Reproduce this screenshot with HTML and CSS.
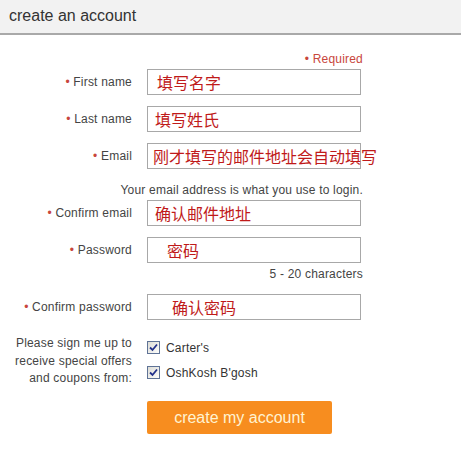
FILE: index.html
```html
<!DOCTYPE html>
<html lang="en">
<head>
  <meta charset="UTF-8" />
  <title>create an account</title>
  <link rel="stylesheet" href="styles.css">
</head>
<body>
  <div class="header">create an account</div>

  <form class="form">
    <p class="required"><span class="dot">&bull;</span> Required</p>

    <div class="row">
      <label class="label"><span class="dot">&bull;</span> First name</label>
      <div class="field"><input type="text" /><span class="ann ann-first">填写名字</span></div>
    </div>
    <div class="row">
      <label class="label"><span class="dot">&bull;</span> Last name</label>
      <div class="field"><input type="text" /><span class="ann">填写姓氏</span></div>
    </div>
    <div class="row">
      <label class="label"><span class="dot">&bull;</span> Email</label>
      <div class="field"><input type="text" /><span class="ann ann-email">刚才填写的邮件地址会自动填写</span></div>
    </div>
    <p class="hint hint-email">Your email address is what you use to login.</p>

    <div class="row">
      <label class="label"><span class="dot">&bull;</span> Confirm email</label>
      <div class="field"><input type="text" /><span class="ann">确认邮件地址</span></div>
    </div>
    <div class="row tight">
      <label class="label"><span class="dot">&bull;</span> Password</label>
      <div class="field"><input type="password" /><span class="ann ann-pw">密码</span></div>
    </div>
    <p class="hint hint-pw">5 - 20 characters</p>

    <div class="row">
      <label class="label"><span class="dot">&bull;</span> Confirm password</label>
      <div class="field"><input type="password" /><span class="ann ann-pw2">确认密码</span></div>
    </div>

    <div class="row offers">
      <div class="label offers-text">Please sign me up to<br>receive special offers<br>and coupons from:</div>
      <div class="options">
        <div class="option">
          <span class="check"><svg width="9" height="9" viewBox="0 0 9 9"><path d="M1 4.5 L3.5 7 L8 1.5" fill="none" stroke="#22308a" stroke-width="1.8"/></svg></span>
          Carter's
        </div>
        <div class="option">
          <span class="check"><svg width="9" height="9" viewBox="0 0 9 9"><path d="M1 4.5 L3.5 7 L8 1.5" fill="none" stroke="#22308a" stroke-width="1.8"/></svg></span>
          OshKosh B'gosh
        </div>
      </div>
    </div>

    <div class="row">
      <div class="label"></div>
      <button type="button" class="submit">create my account</button>
    </div>
  </form>
</body>
</html>
```

FILE: styles.css
```css
body {
  font-family: "Liberation Sans", Arial, sans-serif;
  margin: 0;
  background: #fff;
  color: #444;
}
.header {
  background-color: #f2f2f2;
  height: 33px;
  line-height: 31px;
  padding-left: 9px;
  font-size: 16px;
  color: #333;
  border-bottom: 2px solid #a9a9a9;
}
.form {
  width: 363px;
  margin: 0;
  font-size: 12px;
  letter-spacing: 0.2px;
}
.dot {
  color: #c8463c;
}
.required {
  margin: 17px 0 3px 0;
  line-height: 14px;
  text-align: right;
  color: #c8463c;
}
.row {
  display: flex;
  align-items: center;
  margin-bottom: 11px;
}
.row.tight {
  margin-bottom: 4px;
}
.label {
  width: 132px;
  margin-right: 15px;
  text-align: right;
  flex-shrink: 0;
  line-height: 14px;
}
.field {
  position: relative;
}
.field input {
  display: block;
  width: 214px;
  height: 26px;
  box-sizing: border-box;
  border: 1px solid #a8a8a8;
  margin: 0;
  padding: 0;
}
.ann {
  position: absolute;
  top: 0;
  left: 8px;
  line-height: 26px;
  font-size: 16px;
  font-family: "Noto Sans CJK SC", sans-serif;
  letter-spacing: 0;
  color: #c01a1a;
  white-space: nowrap;
}
.ann-first { left: 10px; }
.ann-email { left: 6px; }
.ann-pw { left: 20px; }
.ann-pw2 { left: 25px; }
.hint {
  text-align: right;
  line-height: 14px;
}
.hint-email {
  margin: 14px 0 3px 0;
}
.hint-pw {
  margin: 0 0 13px 0;
}
.offers {
  align-items: flex-start;
  margin-top: 15px;
}
.offers-text {
  line-height: 17.5px;
}
.options {
  padding-top: 6px;
}
.option {
  display: flex;
  align-items: center;
  height: 13px;
  margin-bottom: 12px;
  color: #333;
}
.option:last-child {
  margin-bottom: 11px;
}
.check {
  width: 11px;
  height: 11px;
  border: 1px solid #5f7396;
  background: linear-gradient(135deg, #dcdcd6, #fdfdfb);
  margin-right: 6px;
  display: flex;
  align-items: center;
  justify-content: center;
}
.submit {
  width: 185px;
  height: 33px;
  border: none;
  border-radius: 2px;
  background-color: #f78d1f;
  color: #fff3d2;
  font-family: "Liberation Sans", Arial, sans-serif;
  font-size: 16px;
  padding: 0;
}
```
